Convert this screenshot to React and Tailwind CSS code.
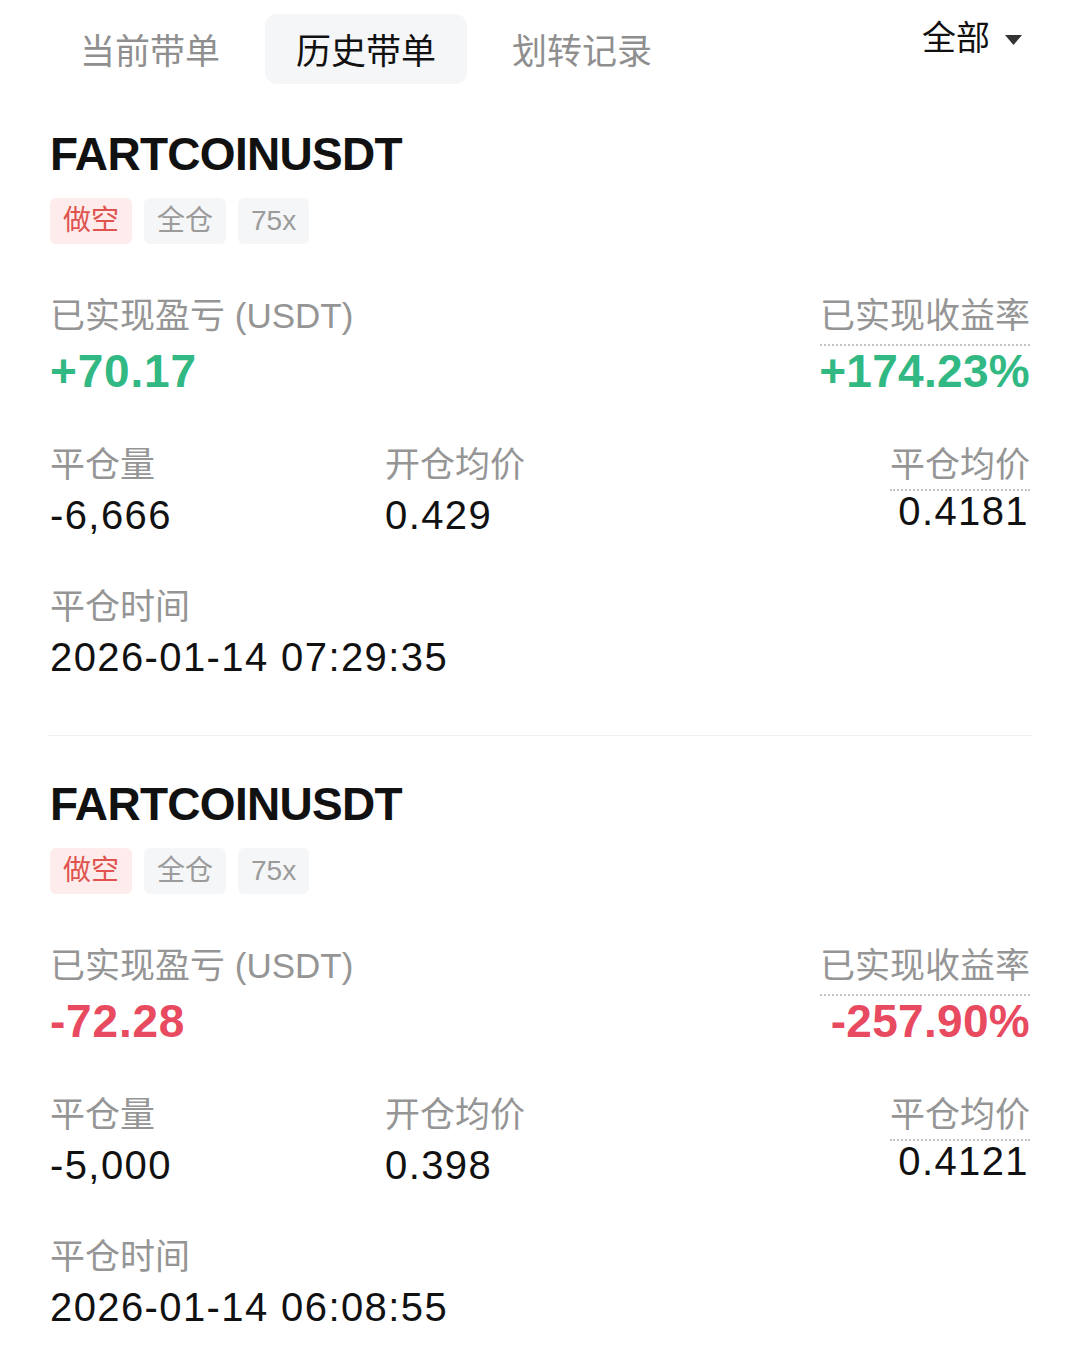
const FONT = "font-['Liberation_Sans','Noto_Sans_CJK_SC',sans-serif]";

const tabs = ["当前带单", "历史带单", "划转记录"];

const orders = [
  {
    symbol: "FARTCOINUSDT",
    pnl: "+70.17",
    roi: "+174.23%",
    up: true,
    qty: "-6,666",
    openPrice: "0.429",
    closePrice: "0.4181",
    closeTime: "2026-01-14 07:29:35",
  },
  {
    symbol: "FARTCOINUSDT",
    pnl: "-72.28",
    roi: "-257.90%",
    up: false,
    qty: "-5,000",
    openPrice: "0.398",
    closePrice: "0.4121",
    closeTime: "2026-01-14 06:08:55",
  },
];

const Label = ({ children, className = "" }) => (
  <div className={`text-[35px] leading-[35px] text-[#959595] ${className}`}>{children}</div>
);

const Value = ({ children, className = "" }) => (
  <div className={`text-[40px] leading-[40px] tracking-[1.4px] text-[#111] ${className}`}>{children}</div>
);

function OrderCard({ o }) {
  const color = o.up ? "text-[#31b883]" : "text-[#e84a5f]";
  return (
    <div className="flex flex-col">
      <h2 className="mt-[31px] text-[46px] leading-[46px] font-bold tracking-[-0.7px] text-[#111]">
        {o.symbol}
      </h2>

      {/* tags */}
      <div className="mt-[21px] flex gap-[12px]">
        <span className="h-[46px] px-[13px] flex items-center rounded-[6px] bg-[#fdeceb] text-[28px] text-[#e0534f]">
          做空
        </span>
        <span className="h-[46px] px-[13px] flex items-center rounded-[6px] bg-[#f5f6f7] text-[28px] text-[#9b9b9b]">
          全仓
        </span>
        <span className="h-[46px] px-[13px] flex items-center rounded-[6px] bg-[#f5f6f7] text-[28px] text-[#9b9b9b]">
          75x
        </span>
      </div>

      {/* pnl */}
      <div className="mt-[54px] flex justify-between items-start">
        <div className="flex flex-col">
          <Label>已实现盈亏 (USDT)</Label>
          <div className={`mt-[15px] text-[46px] leading-[46px] font-bold tracking-[0.8px] ${color}`}>{o.pnl}</div>
        </div>
        <div className="flex flex-col items-end">
          <Label className="pb-[11px] border-b-2 border-dotted border-[#c4c4c4]">已实现收益率</Label>
          <div className={`mt-[2px] text-[46px] leading-[46px] font-bold tracking-[0.3px] ${color}`}>{o.roi}</div>
        </div>
      </div>

      {/* qty / prices */}
      <div className="mt-[53px] grid grid-cols-[335px_1fr_auto] items-start">
        <div className="flex flex-col">
          <Label>平仓量</Label>
          <Value className="mt-[13px]">{o.qty}</Value>
        </div>
        <div className="flex flex-col">
          <Label>开仓均价</Label>
          <Value className="mt-[13px]">{o.openPrice}</Value>
        </div>
        <div className="flex flex-col items-end">
          <Label className="pb-[7px] border-b-2 border-dotted border-[#c4c4c4]">平仓均价</Label>
          <Value className="mt-[0px] pr-[1px]">{o.closePrice}</Value>
        </div>
      </div>

      {/* time */}
      <div className="mt-[54px] flex flex-col">
        <Label>平仓时间</Label>
        <Value className="mt-[13px]">{o.closeTime}</Value>
      </div>
    </div>
  );
}

export default function App() {
  return (
    <div className={`w-[1080px] min-h-[1360px] bg-white ${FONT}`}>
      {/* tabs */}
      <div className="h-[100px] pt-[14px] pl-[49px] pr-[58px] flex justify-between items-start">
        <div className="flex gap-[14px]">
          {tabs.map((t, i) => (
            <div
              key={t}
              className={`h-[70px] px-[31px] pt-[6px] flex items-center rounded-[12px] text-[35px] ${
                i === 1 ? "bg-[#f5f6f7] text-[#111]" : "text-[#8f8f8f]"
              }`}
            >
              {t}
            </div>
          ))}
        </div>
        <div className="h-[48px] flex items-center gap-[15px] text-[34px] text-[#111]">
          <span>全部</span>
          <svg width="17" height="10" viewBox="0 0 17 10" className="mt-[3px]">
            <path d="M0 0h17L8.5 10z" fill="#333" />
          </svg>
        </div>
      </div>

      <div className="px-[50px] flex flex-col">
        {orders.map((o, i) => (
          <div key={i} className="flex flex-col">
            {i > 0 && <div className="mt-[58px] mb-[14px] -mx-[2px] h-px bg-[#f0f0f0]" />}
            <OrderCard o={o} />
          </div>
        ))}
      </div>
    </div>
  );
}
